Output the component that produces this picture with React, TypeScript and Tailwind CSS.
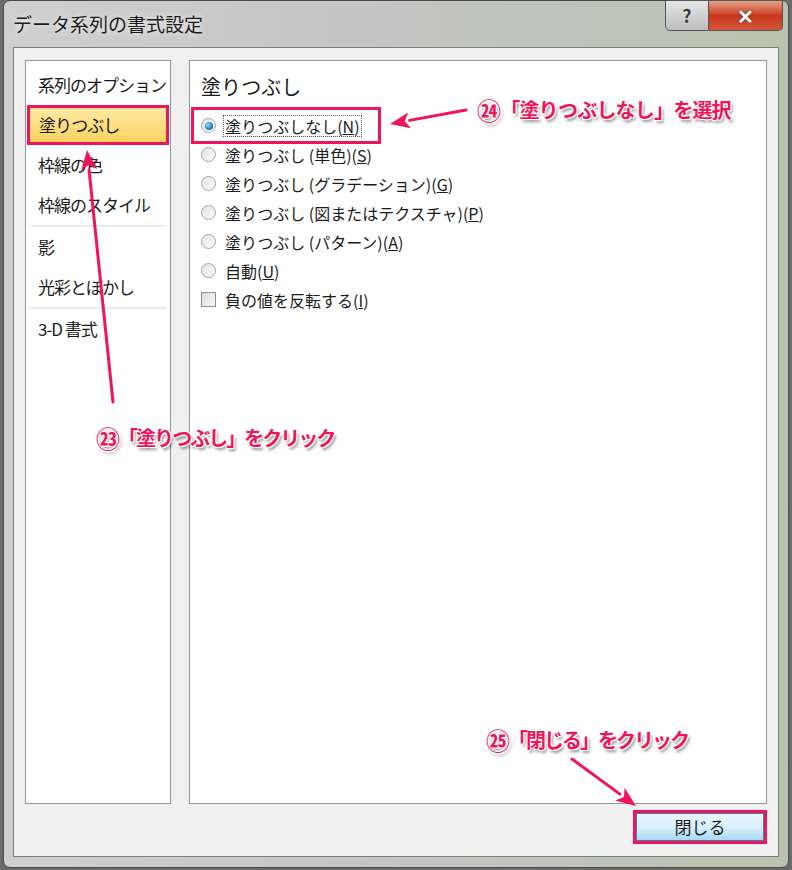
import React from "react";

const jp = "font-['MS_UI_Gothic','Noto_Sans_CJK_JP',sans-serif]";

const sideItems = [
  { label: "系列のオプション" },
  { label: "塗りつぶし", active: true },
  { label: "枠線の色" },
  { label: "枠線のスタイル", sep: true },
  { label: "影" },
  { label: "光彩とぼかし", sep: true },
  { label: "3-D 書式" },
];

const fillOptions = [
  { pre: "塗りつぶしなし(", key: "N", post: ")", checked: true },
  { pre: "塗りつぶし (単色)(", key: "S", post: ")" },
  { pre: "塗りつぶし (グラデーション)(", key: "G", post: ")" },
  { pre: "塗りつぶし (図またはテクスチャ)(", key: "P", post: ")" },
  { pre: "塗りつぶし (パターン)(", key: "A", post: ")" },
  { pre: "自動(", key: "U", post: ")" },
];

const noteText =
  "flex items-center whitespace-nowrap text-[#f0145a] font-bold text-[20px] [text-shadow:1px_1px_0_#fff,-1px_-1px_0_#fff,1px_-1px_0_#fff,-1px_1px_0_#fff,2px_3px_3px_rgba(0,0,0,0.45)]";

function Radio({ checked }: { checked?: boolean }) {
  return (
    <span className="flex h-[15px] w-[15px] shrink-0 items-center justify-center rounded-full border border-[#a5a5a5] bg-gradient-to-br from-[#e4e4e4] to-[#fafafa]">
      {checked && (
        <span className="h-[8px] w-[8px] rounded-full bg-[radial-gradient(circle_at_35%_35%,#9ad8ff,#1e7fc6_60%,#0b4f8a)]" />
      )}
    </span>
  );
}

function Arrow({ x1, y1, x2, y2 }: { x1: number; y1: number; x2: number; y2: number }) {
  const a = Math.atan2(y2 - y1, x2 - x1);
  const len = 20;
  const w = 8;
  const bx = x2 - len * Math.cos(a);
  const by = y2 - len * Math.sin(a);
  const px = -Math.sin(a) * w;
  const py = Math.cos(a) * w;
  return (
    <g>
      <line x1={x1} y1={y1} x2={bx} y2={by} stroke="#f0145a" strokeWidth={3} strokeLinecap="round" />
      <polygon
        points={`${x2},${y2} ${bx + px},${by + py} ${bx + len * 0.25 * Math.cos(a)},${by + len * 0.25 * Math.sin(a)} ${bx - px},${by - py}`}
        fill="#f0145a"
      />
    </g>
  );
}

export default function App() {
  return (
    <div className={`relative h-[870px] w-[792px] overflow-hidden bg-[#6b6b6b] ${jp}`}>
      {/* window frame */}
      <div className="ml-[3px] flex h-[868px] w-[786px] flex-col rounded-[7px] border border-[#4a4a4a] bg-gradient-to-r from-[#cfcfcf] via-[#c4c4c4] to-[#b9c2ae] px-[9px] pb-[10px]">
        {/* title bar */}
        <div className="relative flex h-[46px] shrink-0 items-center">
          <span className="pt-[1px] text-[19px] text-[#1b1b1b] [text-shadow:0_0_6px_#fff]">データ系列の書式設定</span>
          <div className="absolute right-[-4px] top-[-1px] flex h-[31px]">
            <div className="flex w-[44px] items-center justify-center rounded-bl-[5px] border border-[#555] bg-gradient-to-b from-[#e6e6e6] to-[#bdbdbd] text-[18px] font-bold text-[#3a3a3a] [text-shadow:0_0_2px_#fff]">
              ?
            </div>
            <div className="flex w-[74px] items-center justify-center rounded-br-[5px] border border-l-0 border-[#555] bg-gradient-to-b from-[#e4a08a] via-[#c8371a] to-[#d2553a] text-[20px] font-bold text-white [text-shadow:0_0_2px_#333]">
              ✕
            </div>
          </div>
        </div>

        {/* client area */}
        <div className="flex flex-1 flex-col border border-[#7d7d7d] bg-[#f0f0f0] px-[11px] pb-[12px] pt-[12px]">
          <div className="flex flex-1 gap-[18px]">
            {/* left list */}
            <div className="w-[146px] border border-[#8e939c] bg-white pt-[4px]">
              {sideItems.map((it) => (
                <div key={it.label}>
                  <div
                    className={
                      it.active
                        ? "mx-[1px] flex h-[40px] items-center whitespace-nowrap border-[3px] border-[#f0145a] bg-gradient-to-b from-[#fde9a4] to-[#fbd25c] pl-[9px] text-[17px] tracking-[-1px] text-[#1b1b1b]"
                        : "flex h-[40px] items-center whitespace-nowrap pl-[12px] text-[17px] tracking-[-1px] text-[#1b1b1b]"
                    }
                  >
                    {it.label}
                  </div>
                  {it.sep && <div className="mx-[4px] h-[2px] bg-[#e8ecf2]" />}
                </div>
              ))}
            </div>

            {/* right panel */}
            <div className="flex-1 border border-[#8e939c] bg-white px-[11px] pt-[12px]">
              <div className="text-[20px] leading-[28px] text-[#1b1b1b]">塗りつぶし</div>
              <div className="mt-[10px] flex flex-col">
                {fillOptions.map((o) => (
                  <div
                    key={o.key}
                    className={
                      o.checked
                        ? "-mx-[10px] -my-[4px] flex h-[37px] w-[190px] items-center gap-[7px] border-[3px] border-[#f0145a] pl-[7px]"
                        : "flex h-[29px] items-center gap-[7px]"
                    }
                  >
                    <Radio checked={o.checked} />
                    <span
                      className={`whitespace-nowrap text-[16px] leading-[20px] text-[#1b1b1b] ${o.checked ? "border border-dotted border-[#555] px-[1px]" : "px-[2px]"}`}
                    >
                      {o.pre}
                      <span className="underline">{o.key}</span>
                      {o.post}
                    </span>
                  </div>
                ))}
                <div className="flex h-[29px] items-center gap-[7px]">
                  <span className="h-[15px] w-[15px] border border-[#8e8e8e] bg-gradient-to-br from-[#dcdcdc] to-[#f8f8f8]" />
                  <span className="px-[2px] text-[16px] leading-[20px] text-[#1b1b1b]">
                    負の値を反転する(<span className="underline">I</span>)
                  </span>
                </div>
              </div>
            </div>
          </div>

          {/* button row */}
          <div className="mt-[6px] flex justify-end">
            <div className="border-[3px] border-[#f0145a] bg-white">
              <div className="flex h-[28px] w-[128px] items-center justify-center border border-[#3c7fb1] bg-gradient-to-b from-[#eaf6fd] via-[#d9f0fc] to-[#a7d9f5] text-[17px] text-[#1b1b1b]">
                閉じる
              </div>
            </div>
          </div>
        </div>
      </div>

      {/* annotations */}
      <svg className="pointer-events-none absolute left-0 top-0" width="792" height="870">
        <Arrow x1={466} y1={110} x2={390} y2={124} />
        <Arrow x1={113} y1={402} x2={87} y2={150} />
        <Arrow x1={572} y1={759} x2={636} y2={806} />
      </svg>
      <div className={`absolute left-[477px] top-[92px] tracking-[-0.8px] ${noteText}`}>
        <span className="text-[24px]">㉔</span>「塗りつぶしなし」を選択
      </div>
      <div className={`absolute left-[96px] top-[420px] tracking-[-2px] ${noteText}`}>
        <span className="text-[24px]">㉓</span>「塗りつぶし」をクリック
      </div>
      <div className={`absolute left-[486px] top-[722px] tracking-[-2px] ${noteText}`}>
        <span className="text-[24px]">㉕</span>「閉じる」をクリック
      </div>
    </div>
  );
}
